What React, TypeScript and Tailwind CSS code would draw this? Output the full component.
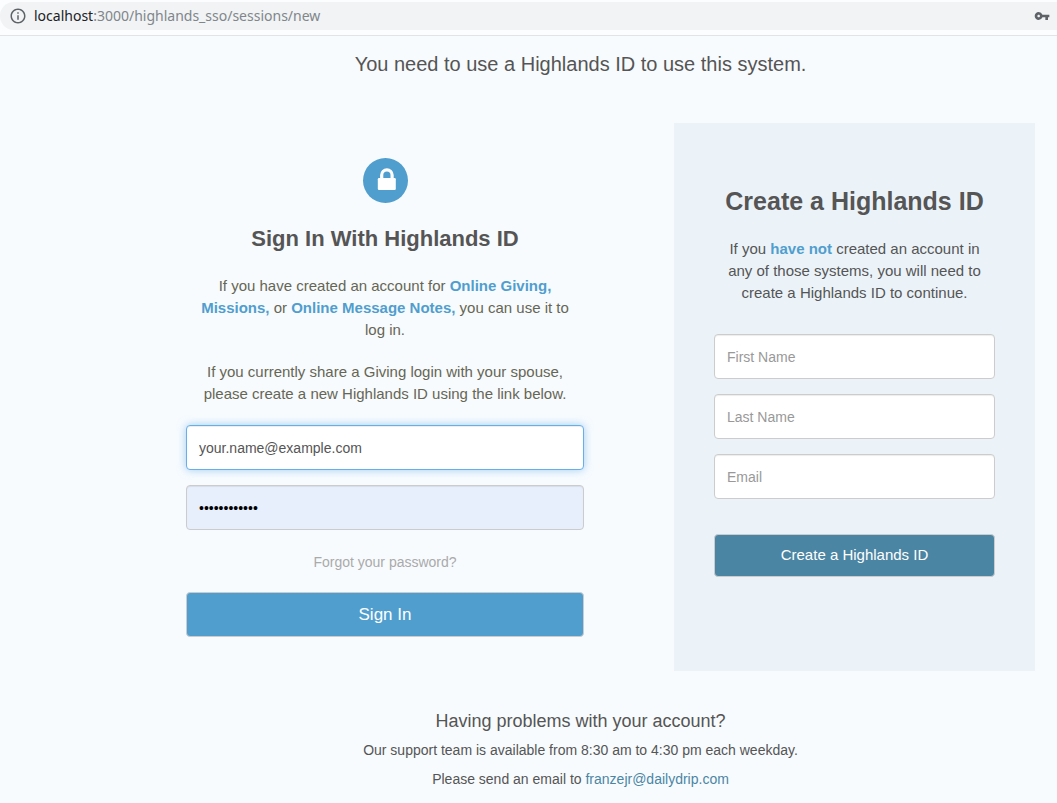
import React from "react";
import { MdInfoOutline, MdVpnKey } from "react-icons/md";

const fieldBase =
  "block h-[45px] w-full rounded border px-3 text-sm outline-none placeholder:text-[#999999]";
const fieldPlain =
  "border-[#cccccc] bg-white text-[#555555] shadow-[inset_0_1px_1px_rgba(0,0,0,0.075)]";

type FieldProps = {
  id: string;
  label: string;
  type?: string;
};

function SignupField({ id, label, type = "text" }: FieldProps) {
  return (
    <input
      id={id}
      type={type}
      aria-label={label}
      placeholder={label}
      className={`${fieldBase} ${fieldPlain}`}
    />
  );
}

function AddressBar() {
  return (
    <header className="border-b border-[#e1e3e6] bg-[#fbfdfe] pt-[2px] pb-[5px]">
      <div className="flex h-7 items-center rounded-l-full bg-[#f1f3f4] pr-[7px] pl-[9px] font-['Noto_Sans',sans-serif] text-sm text-[#80868b]">
        <MdInfoOutline className="mr-[7px] size-[18px] shrink-0 text-[#5f6368]" />
        <span className="grow">
          <span className="text-[#202124]">localhost</span>:3000/highlands_sso/sessions/new
        </span>
        <MdVpnKey className="size-4 shrink-0 text-[#5f6368]" />
      </div>
    </header>
  );
}

function LockBadge() {
  return (
    <div className="flex size-[45px] items-center justify-center rounded-full bg-[#509ece]">
      <svg viewBox="0 0 45 45" className="size-[45px]" aria-hidden="true">
        <path
          d="M18.7 21.5V17a5.2 5.2 0 0 1 10.4 0v4.5"
          fill="none"
          stroke="white"
          strokeWidth="3.2"
        />
        <rect x="14.8" y="20" width="18" height="12" rx="1.2" fill="white" />
      </svg>
    </div>
  );
}

function SignIn() {
  return (
    <section className="flex grow basis-0 flex-col items-center pt-[35px] pr-[90px] pl-[60px] text-center">
      <LockBadge />
      <h2 className="mt-[21px] text-[22px] leading-[30px] font-bold text-[#555555]">
        Sign In With Highlands ID
      </h2>
      <p className="mt-[21px] px-2 text-[15px] leading-[22px] text-[#666655]">
        If you have created an account for <b className="text-[#509ece]">Online Giving, Missions,</b>{" "}
        or <b className="text-[#509ece]">Online Message Notes,</b> you can use it to log in.
      </p>
      <p className="mt-5 px-2 text-[15px] leading-[22px] text-[#666655]">
        If you currently share a Giving login with your spouse, please create a new Highlands ID
        using the link below.
      </p>
      <form className="mt-5 w-full" onSubmit={(e) => e.preventDefault()}>
        <input
          id="login-email"
          type="email"
          aria-label="Email"
          defaultValue="your.name@example.com"
          className={`${fieldBase} border-[#66afe9] bg-white text-[#555555] shadow-[inset_0_1px_1px_rgba(0,0,0,0.075),0_0_8px_rgba(102,175,233,0.6)]`}
        />
        <input
          id="login-password"
          type="password"
          aria-label="Password"
          defaultValue="highlands123"
          className={`${fieldBase} mt-[15px] border-[#cccccc] bg-[#e8effc] text-black shadow-[inset_0_1px_1px_rgba(0,0,0,0.075)]`}
        />
        <a href="#forgot" className="mt-[22px] inline-block text-sm text-[#aaaaaa]">
          Forgot your password?
        </a>
        <button
          type="submit"
          className="mt-[18px] block h-[45px] w-full rounded border border-[#cccccc] bg-[#509ece] text-[17px] text-white"
        >
          Sign In
        </button>
      </form>
    </section>
  );
}

function CreateAccount() {
  return (
    <section className="min-h-[548px] w-[361px] shrink-0 bg-[#ebf3f9] px-10 pt-[62px] text-center">
      <h2 className="text-[25px] leading-8 font-bold text-[#555555]">Create a Highlands ID</h2>
      <p className="mt-[21px] px-2 text-[15px] leading-[22px] text-[#555555]">
        If you <b className="text-[#509ece]">have not</b> created an account in any of those
        systems, you will need to create a Highlands ID to continue.
      </p>
      <form className="mt-[30px] flex flex-col gap-[15px]" onSubmit={(e) => e.preventDefault()}>
        <SignupField id="first-name" label="First Name" />
        <SignupField id="last-name" label="Last Name" />
        <SignupField id="email" label="Email" type="email" />
        <button
          type="submit"
          className="mt-5 h-[43px] rounded border border-[#cccccc] bg-[#4b85a4] text-[15px] text-white"
        >
          Create a Highlands ID
        </button>
      </form>
    </section>
  );
}

export default function App() {
  return (
    <div className="min-h-screen bg-[#f7fbfe] font-['Liberation_Sans',Arial,sans-serif] text-[#555555]">
      <AddressBar />
      <main className="pt-[14px] pr-[22px] pb-3 pl-[126px]">
        <h1 className="text-center text-xl leading-7">
          You need to use a Highlands ID to use this system.
        </h1>
        <div className="mt-[45px] flex">
          <SignIn />
          <CreateAccount />
        </div>
        <footer className="mt-[38px] text-center text-sm leading-5">
          <h3 className="text-lg leading-6">Having problems with your account?</h3>
          <p className="mt-[7px]">Our support team is available from 8:30 am to 4:30 pm each weekday.</p>
          <p className="mt-[9px]">
            Please send an email to{" "}
            <a href="mailto:franzejr@dailydrip.com" className="text-[#4b85a4]">
              franzejr@dailydrip.com
            </a>
          </p>
        </footer>
      </main>
    </div>
  );
}
